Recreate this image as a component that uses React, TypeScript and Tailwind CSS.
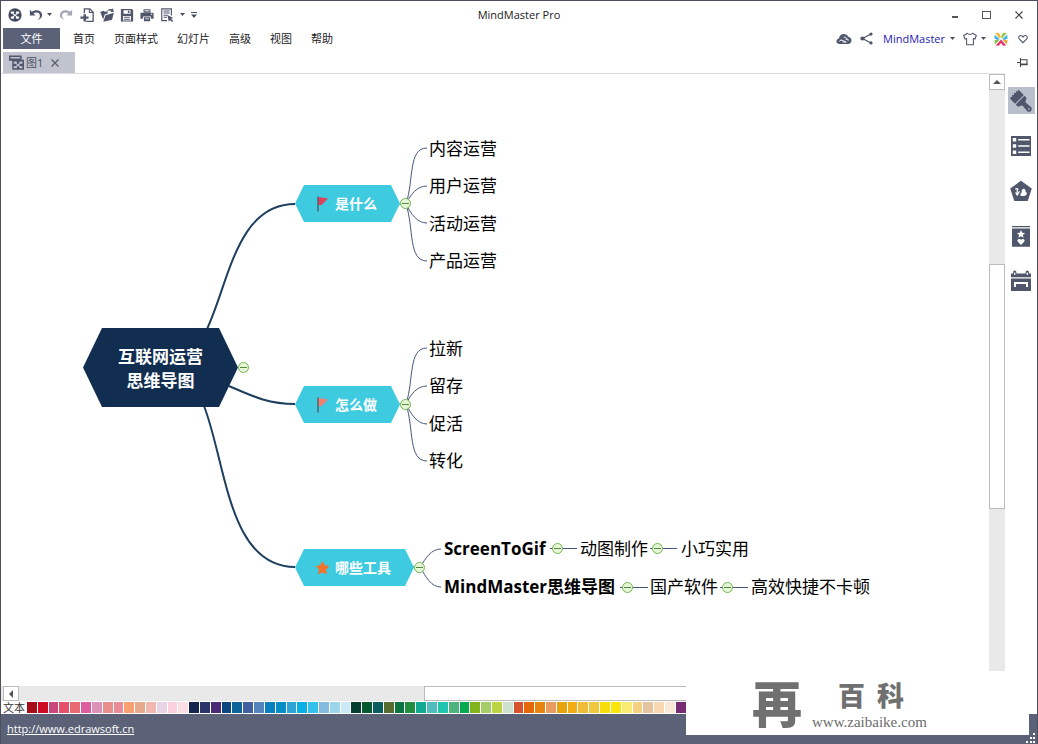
import React from "react";

type P = { className?: string };

function Caret({ className = "" }: P) {
  return (
    <svg viewBox="0 0 5 3" className={`h-[3px] w-[5px] shrink-0 ${className}`} fill="#4a5064">
      <path d="M0 0h5L2.500 3z" />
    </svg>
  );
}

function Icon({ children, className = "size-3.5" }: { children: React.ReactNode; className?: string }) {
  return (
    <svg viewBox="0 0 16 16" className={`shrink-0 ${className}`} fill="#50576d" aria-hidden="true">
      {children}
    </svg>
  );
}

const LogoIcon = () => (
  <Icon>
    <circle cx="8" cy="8" r="7.600" fill="#454b5f" />
    <g fill="#fff">
      <rect x="3.200" y="4" width="3.800" height="2.600" rx=".8" />
      <rect x="9" y="4" width="3.800" height="2.600" rx=".8" />
      <rect x="3.200" y="9.600" width="3.800" height="2.600" rx=".8" />
      <rect x="9" y="9.600" width="3.800" height="2.600" rx=".8" />
      <path d="M5.500 6.500l5 3.600M10.500 6.500l-5 3.600" stroke="#fff" strokeWidth="1.200" />
    </g>
  </Icon>
);

const UndoIcon = () => (
  <Icon>
    <path d="M1 2v6.500h6.500L5.200 6.200C8 4.400 12.600 5 12.400 9c0 2-.9 3.200-2.400 4.600C13.600 12.400 15.300 10 15 7.400 14.600 2.600 8 .9 3.300 4.300z" />
  </Icon>
);

const RedoIcon = () => (
  <Icon>
    <path fill="#a5a8b2" d="M15 2v6.500H8.500l2.300-2.300C8 4.400 3.400 5 3.600 9c0 2 .9 3.200 2.400 4.600C2.400 12.400.7 10 1 7.400 1.400 2.600 8 .9 12.700 4.300z" />
  </Icon>
);

const NewIcon = () => (
  <Icon>
    <path d="M5 6V1h6.200L15 4.800V15.300H7" fill="none" stroke="#50576d" strokeWidth="1.500" />
    <path d="M10.700 1v4.200H15" fill="none" stroke="#50576d" strokeWidth="1.200" />
    <path d="M4 7h2.800v2.800h3v2.600h-3v3H4v-3H.5V9.800H4z" />
  </Icon>
);

const OpenIcon = () => (
  <Icon>
    <path d="M.3 4.500l3.600-1.300 1.700 1.200 2.900-.6.6 2.300-3.800 1.300-1.600 5.800z" />
    <path d="M6.300 8.200L15.800 5.400l-2 8-10 2.300z" />
    <path d="M8 3.400C9.500 1.300 11.500.8 13.500 1.500L14.400.2 16 4.200l-4.200.3.800-1.400C11 2.500 9.600 2.600 8 3.400z" />
  </Icon>
);

const SaveIcon = () => (
  <Icon>
    <path fillRule="evenodd" d="M1 1h12.500L15 2.500V15.500H1zM4 2.500v4h8v-4zM3.500 9v5.200h9V9z" />
    <path d="M9 3h1.800v2.800H9zM4.700 10h6.600v1.100H4.700zM4.700 12.200h6.600v1.100H4.700z" />
  </Icon>
);

const PrintIcon = () => (
  <Icon>
    <path d="M4 1.500h8V5H4zM.5 5.500h15v6.800h-3V9.700h-9v2.600h-3zM4.500 10.700h7v4.300h-7z" />
    <path d="M5.200 2.500h5.600v1.300H5.200zM12.500 6.600h1.500v1.100h-1.500zM5.800 12h4.400v.8H5.800z" fill="#fff" />
  </Icon>
);

const ExportIcon = () => (
  <Icon>
    <path d="M13 8.500V1H2v13.500h6" fill="none" stroke="#50576d" strokeWidth="1.300" />
    <path d="M4 3.400h7M4 5.800h7M4 8.200h5M4 10.600h4" stroke="#50576d" strokeWidth="1.200" />
    <path d="M8.500 8l6.800 3.500-2.600.9 2.300 2.400-1.300 1.200-2.300-2.400-1.400 2z" />
  </Icon>
);

const TabIcon = () => (
  <Icon className="size-[15px]">
    <path fillRule="evenodd" d="M0 .5h13.500V5H16v10.800H3.500V6H0zM1.500 2v1.800h10.300V2z" />
    <g fill="#c1c3cf">
      <rect x="5" y="7" width="3.400" height="2.200" rx=".5" />
      <rect x="11" y="7" width="3.400" height="2.200" rx=".5" />
      <rect x="5" y="12" width="3.400" height="2.200" rx=".5" />
      <rect x="11" y="12" width="3.400" height="2.200" rx=".5" />
    </g>
    <path d="M7.200 8.600l5 4.200M12.200 8.600l-5 4.200" stroke="#c1c3cf" strokeWidth="1.200" />
  </Icon>
);

const CloudIcon = () => (
  <Icon className="size-4">
    <path d="M3.800 13C1.600 13 .3 11.800.4 10.300.5 8.800 1.500 7.700 3 7.400 3.300 4.600 5.400 3 7.800 3c2 0 3.600 1 4.400 2.700 2 .2 3.300 1.700 3.300 3.700 0 2.100-1.500 3.600-3.600 3.600z" />
    <path d="M3.200 10.500c.8-1.700 2.600-1.900 3.800-.8l3.500 1.600M7.600 6.500c1.400-.8 3-.1 3.200 1.400" stroke="#fff" strokeWidth="1" fill="none" />
    <path d="M6.500 11h3.200M9.500 8.300h2.600v1.500" stroke="#fff" strokeWidth=".9" fill="none" />
  </Icon>
);

const ShareIcon = () => (
  <Icon className="size-[13px]">
    <path d="M13.500 2.500L3 8l10.500 5.500" fill="none" stroke="#50576d" strokeWidth="1.500" />
    <circle cx="13.500" cy="2.500" r="2" />
    <circle cx="3" cy="8" r="2.600" />
    <circle cx="13.500" cy="13.500" r="2" />
  </Icon>
);

const ShirtIcon = () => (
  <Icon className="size-3.5">
    <path d="M5 1.500L.8 4l1.400 4 1.900-.6V14.500h7.800V7.400l1.900.6 1.400-4L11 1.500c-1.200 1.700-4.800 1.700-6 0z" fill="none" stroke="#50576d" strokeWidth="1.200" strokeLinejoin="round" />
  </Icon>
);

const PinwheelIcon = () => (
  <Icon className="size-3.5">
    <path d="M1.500 1.200L5.500.8 8 5.800 6.500 7z" fill="#f2b234" />
    <path d="M14.500 1.200L10.500.8 8 5.800 9.500 7z" fill="#8dc63f" />
    <path d="M.8 3.200L6.500 8 4 9 .5 7.500z" fill="#3bb4e0" />
    <path d="M15.200 3.200L9.500 8 12 9l3.500-1.500z" fill="#3bb4e0" />
    <path d="M.5 9.500L4 9l2.500-.3-5.200 5.500z" fill="#7cc242" />
    <path d="M15.500 9.500L12 9l-2.500-.3 5.200 5.500z" fill="#f4a32a" />
    <path d="M2 15.300L8 8.500l6 6.800-3.600.4L8 12.500l-2.400 3.200z" fill="#e6336f" />
  </Icon>
);

const HeartIcon = () => (
  <Icon className="size-2.5">
    <path d="M8 14L2 8C-.5 5 3 .8 6.500 3.200L8 5l1.500-1.800C13 .8 16.500 5 14 8z" fill="none" stroke="#50576d" strokeWidth="1.700" />
  </Icon>
);

const PinIcon = () => (
  <Icon className="size-[11px]">
    <path d="M0 8h5M5 1.500v13M5 4h9.500v7H5" fill="none" stroke="#444" strokeWidth="1.500" />
    <path d="M5 9.500h10.300V12H5z" fill="#444" />
  </Icon>
);

const railIcons = [
  {
    label: "格式",
    art: (
      <g transform="translate(9.500 9.500) rotate(-45)">
        <path d="M-6.200-8.200l1.500-1.300 1.200 1 1.400-1.300 1.400 1.200L.8-9.900l1.400 1.300 1.300-1 1.300 1.200 1.400-.8V-1.600H-6.200z" />
        <path d="M-6.200-.6H6.200V1.800C6.200 3.600 2.200 3.500 2.200 5.200L2.700 12c.3 3.600-5.700 3.600-5.400 0l.5-6.800C-2.200 3.500-6.200 3.600-6.200 1.800z" />
        <circle cx="0" cy="12" r=".9" fill="#b9bfcb" />
      </g>
    ),
  },
  {
    label: "大纲",
    art: (
      <g>
        <path d="M0 0h20v20H0z" />
        <path d="M1.800 2h3.400v3.400H1.800zM1.800 8.300h3.400v3.400H1.800zM1.800 14.600h3.400V18H1.800zM7.200 3h11.300v1.500H7.200zM7.200 9.300h11.300v1.500H7.200zM7.200 15.600h11.300v1.500H7.200z" fill="#fff" />
      </g>
    ),
  },
  {
    label: "图标",
    art: (
      <g>
        <path d="M10-.3L20.800 7.600 16.700 20H3.300L-.8 7.600z" />
        <path d="M9.500 14.700c2.200.5 5.800.5 6.300-1.800.2-1.300-.4-2-1.300-2.500.3-1.500-1.400-3.400-3-2.200-1.300 1-.9 2.100-.5 3-1.200.6-1.900 1.900-1.500 3.500z" fill="#fff" />
        <path d="M4.300 8.200c1.200-1 2.300-.6 3 .4M6.200 8.500v5.600M4.600 11.500l1.600 2.600 2.300-3.800" stroke="#fff" strokeWidth="1.200" fill="none" />
      </g>
    ),
  },
  {
    label: "剪贴画",
    art: (
      <g>
        <path d="M1 0h18v1.200H1zM1 2.600h18V20.800H1z" />
        <path d="M10 4l1.200 2.700 2.900.3-2.200 1.900.7 2.800L10 10.200l-2.600 1.500.7-2.800L5.900 7l2.900-.3zM10 19l-3.200-3.300c-1.500-2 1.500-3.900 3.200-1.900 1.700-2 4.700-.1 3.200 1.900z" fill="#fff" />
      </g>
    ),
  },
  {
    label: "任务",
    art: (
      <g>
        <path d="M0 2.500h2V1.200a1.700 1.700 0 0 1 3.400 0V2.500h9.200V1.200a1.700 1.700 0 0 1 3.400 0V2.500h2v3.700H0zM0 7.500h20V20H0z" />
        <path d="M3.100 1.500h1.200v2.400H3.100zM15.700 1.500h1.200v2.400h-1.200zM3 11h14v5H3z" fill="#fff" />
        <path d="M5 13h10v3H5z" />
      </g>
    ),
  },
];

const menus = ["首页", "页面样式", "幻灯片", "高级", "视图", "帮助"];

const swatches = [
  "bg-[#a80c18]", "bg-[#cc0a24]", "bg-[#c9487a]", "bg-[#e6506a]", "bg-[#e66a70]",
  "bg-[#df5ca0]", "bg-[#dd92b8]", "bg-[#e88c8c]", "bg-[#e88c98]", "bg-[#f9a070]",
  "bg-[#e8a88c]", "bg-[#f2b8b0]", "bg-[#e8d4e4]", "bg-[#f9d0dc]", "bg-[#fbdfe4]",
  "bg-[#14244e]", "bg-[#2a3668]", "bg-[#4a2a74]", "bg-[#0c4680]", "bg-[#0c6498]",
  "bg-[#4060a0]", "bg-[#5484bc]", "bg-[#0a80c0]", "bg-[#0a8cc4]", "bg-[#2ca4d4]",
  "bg-[#06b0e4]", "bg-[#34c0ec]", "bg-[#84bce0]", "bg-[#9cd4ea]", "bg-[#cce8f4]",
  "bg-[#053f30]", "bg-[#065a30]", "bg-[#0a5e60]", "bg-[#566c30]", "bg-[#0a7440]",
  "bg-[#209040]", "bg-[#10a890]", "bg-[#50bcc0]", "bg-[#20c4b0]", "bg-[#4cb47c]",
  "bg-[#06a850]", "bg-[#80b41c]", "bg-[#a4cc68]", "bg-[#bcd444]", "bg-[#cce0cc]",
  "bg-[#d8502c]", "bg-[#e46808]", "bg-[#e8840c]", "bg-[#e89c60]", "bg-[#e8a40c]",
  "bg-[#f4ac14]", "bg-[#f0bc38]", "bg-[#f0c840]", "bg-[#f8dc0c]", "bg-[#fce60a]",
  "bg-[#f8ec70]", "bg-[#f4d080]", "bg-[#e4c4a0]", "bg-[#f8d8b0]", "bg-[#f8e8d8]",
  "bg-[#782c74]",
];

const leaves = [
  { text: "内容运营", at: "left-[428px] top-[63px]" },
  { text: "用户运营", at: "left-[428px] top-[100px]" },
  { text: "活动运营", at: "left-[428px] top-[138px]" },
  { text: "产品运营", at: "left-[428px] top-[175px]" },
  { text: "拉新", at: "left-[428px] top-[263px]" },
  { text: "留存", at: "left-[428px] top-[300px]" },
  { text: "促活", at: "left-[428px] top-[338px]" },
  { text: "转化", at: "left-[428px] top-[375px]" },
  { text: "ScreenToGif", at: "left-[443px] top-[463px]", bold: true },
  { text: "动图制作", at: "left-[579px] top-[463px]" },
  { text: "小巧实用", at: "left-[680px] top-[463px]" },
  { text: "MindMaster思维导图", at: "left-[443px] top-[501px]", bold: true },
  { text: "国产软件", at: "left-[649px] top-[501px]" },
  { text: "高效快捷不卡顿", at: "left-[750px] top-[501px]" },
];

const toggles = [
  "left-[237px] top-[288px]",
  "left-[399px] top-[124px]",
  "left-[399px] top-[325px]",
  "left-[413px] top-[488px]",
  "left-[551px] top-[469px]",
  "left-[651px] top-[469px]",
  "left-[621px] top-[508px]",
  "left-[721px] top-[508px]",
];

const Flag = ({ color }: { color: string }) => (
  <svg viewBox="0 0 13 16" className="h-4 w-[13px] shrink-0">
    <path d="M2 1l10 1.500L5.500 9H2z" fill={color} />
    <path d="M2 .5v15" stroke="#5a5f6e" strokeWidth="1.500" />
  </svg>
);

const Star = () => (
  <svg viewBox="0 0 14 14" className="h-3.5 w-[13px] shrink-0">
    <path d="M7 .6l2 4 4.300.6-3.100 3.200.8 4.600L7 11l-4 2 .8-4.600L.7 5.200 5 4.600z" fill="#f4722a" stroke="#f4722a" strokeWidth="1.200" strokeLinejoin="round" />
  </svg>
);

const topics = [
  { text: "是什么", at: "left-[294px] top-[111px] w-[105px] [clip-path:polygon(9px_0,96px_0,100%_50%,96px_100%,9px_100%,0_50%)]", icon: <Flag color="#e0405c" /> },
  { text: "怎么做", at: "left-[294px] top-[312px] w-[105px] [clip-path:polygon(9px_0,96px_0,100%_50%,96px_100%,9px_100%,0_50%)]", icon: <Flag color="#f08070" /> },
  { text: "哪些工具", at: "left-[294px] top-[475px] w-[119px] [clip-path:polygon(9px_0,110px_0,100%_50%,110px_100%,9px_100%,0_50%)]", icon: <Star /> },
];

function Connectors() {
  return (
    <svg className="absolute inset-0 h-full w-full" fill="none">
      <g transform="translate(-1 -74)">
        <g stroke="#1e3f5e" strokeWidth="2">
          <path d="M207 329C229 282 237 204 295 204" />
          <path d="M229 386C252 396 268 404 295 404" />
          <path d="M204 406C226 462 228 567 295 567" />
        </g>
        <g stroke="#44567c">
          <path d="M399 204H406C414 180 408 148 427 148M406 204C411 194 417 186 427 186M406 204C411 214 417 223 427 223M406 204C414 228 408 261 427 261" />
          <path d="M399 404H406C414 380 408 348 427 348M406 404C411 394 417 386 427 386M406 404C411 414 417 424 427 424M406 404C414 428 408 461 427 461" />
          <path d="M413 567H420C426 558 431 549 441 549M420 567C426 577 431 587 441 587" />
          <path d="M550 548.500H577M650 548.500H677M620 587.500H648M720 587.500H748" />
        </g>
      </g>
    </svg>
  );
}

export default function App() {
  return (
    <div className="relative flex min-h-screen flex-col border-x border-t border-[#4d4f5c] bg-white font-['Open_Sans','Noto_Sans_CJK_SC',sans-serif] text-[11px] text-[#222]">
      <header>
        <div className="grid h-[27px] grid-cols-[1fr_auto_1fr] items-center">
          <div className="flex items-center gap-[7px] pl-[7px]">
            <LogoIcon />
            <span className="flex items-center gap-1">
              <button aria-label="撤销"><UndoIcon /></button>
              <Caret />
            </span>
            <button aria-label="恢复"><RedoIcon /></button>
            <span className="flex items-center gap-[6px]">
              <button aria-label="新建"><NewIcon /></button>
              <button aria-label="打开"><OpenIcon /></button>
              <button aria-label="保存"><SaveIcon /></button>
              <button aria-label="打印"><PrintIcon /></button>
              <button aria-label="导出"><ExportIcon /></button>
              <Caret />
              <button aria-label="自定义工具栏">
                <svg viewBox="0 0 6 6" className="h-1.5 w-1.5" fill="#4a5064">
                  <path d="M0 0h6v1H0zM0 2.500h6L3 6z" />
                </svg>
              </button>
            </span>
          </div>
          <h1 className="pt-[2px] text-[11px]">MindMaster Pro</h1>
          <div className="flex items-center justify-end gap-6 pr-[14px]">
            <button aria-label="最小化" className="flex h-3 w-[6px] items-center"><span className="mt-1 h-[2px] w-full bg-[#555]" /></button>
            <button aria-label="最大化" className="h-2 w-[9px] border border-[#555]" />
            <button aria-label="关闭">
              <svg viewBox="0 0 8 8" className="size-2" stroke="#444" strokeWidth="1.200"><path d="M.5.5l7 7M7.500.5l-7 7" /></svg>
            </button>
          </div>
        </div>
        <div className="flex h-[21px] items-stretch">
          <button className="ml-[2px] w-[57px] bg-[#5b6278] pt-[2px] text-white">文件</button>
          <nav className="ml-[13px] flex gap-[19px] pt-[2px]">
            {menus.map((m) => (
              <button key={m}>{m}</button>
            ))}
          </nav>
          <div className="ml-auto flex items-center gap-2 pr-[9px]">
            <button aria-label="云"><CloudIcon /></button>
            <button aria-label="分享"><ShareIcon /></button>
            <button className="ml-[2px] flex items-center gap-[5px] text-[#1c1cb4]">
              <span className="pt-[2px]">MindMaster</span> <Caret />
            </button>
            <button aria-label="主题" className="flex items-center gap-1"><ShirtIcon /><Caret /></button>
            <button aria-label="应用"><PinwheelIcon /></button>
            <button aria-label="收藏" className="pl-[2px]"><HeartIcon /></button>
          </div>
        </div>
        <div className="mt-[3px] flex h-[21px] items-center justify-between">
          <div className="ml-[2px] flex h-full w-[72px] items-center gap-[2px] bg-[#c1c3cf] pl-1.5 text-[#4a5064]">
            <TabIcon />
            <span className="pt-[2px]">图1</span>
            <button aria-label="关闭标签" className="ml-1.5">
              <svg viewBox="0 0 8 8" className="size-2" stroke="#50576d" strokeWidth="1.100"><path d="M.5.5l7 7M7.500.5l-7 7" /></svg>
            </button>
          </div>
          <button aria-label="固定" className="mr-[9px]"><PinIcon /></button>
        </div>
      </header>

      <div className="flex flex-1">
        <div className="flex flex-1 flex-col">
          <div className="flex flex-1">
            <main className="relative min-h-[540px] flex-1 overflow-hidden border-t border-[#dcdce0]">
              <Connectors />
              <div className="absolute left-[82px] top-[254px] flex h-[79px] w-[155px] items-center justify-center bg-[#112d50] pt-[2px] text-center text-[17px] leading-6 font-bold text-white [clip-path:polygon(19px_0,136px_0,100%_50%,136px_100%,19px_100%,0_50%)]">
                互联网运营
                <br />
                思维导图
              </div>
              {topics.map((t) => (
                <div key={t.text} className={`absolute flex h-[37px] items-center gap-1.5 bg-[#3fcbdf] pl-[21px] text-[14px] leading-5 font-bold whitespace-nowrap text-white ${t.at}`}>
                  {t.icon}
                  {t.text}
                </div>
              ))}
              {leaves.map((l) => (
                <div key={l.text} className={`absolute text-[17px] leading-6 whitespace-nowrap text-black ${l.bold ? "font-bold" : ""} ${l.at}`}>
                  {l.text}
                </div>
              ))}
              {toggles.map((at) => (
                <button key={at} aria-label="折叠" className={`absolute flex size-[11px] items-center justify-center rounded-full border border-[#72b84e] bg-[#e6f6d6] ${at}`}>
                  <span className="h-px w-[7px] bg-[#4f8a3c]" />
                </button>
              ))}
            </main>
            <div className="flex w-4 flex-col bg-[#e9e9e9]">
              <button aria-label="向上滚动" className="mt-px flex h-4 items-center justify-center border border-[#bbb] bg-white">
                <svg viewBox="0 0 8 4" className="h-1 w-2" fill="#555"><path d="M4 0l4 4H0z" /></svg>
              </button>
              <div className="mt-[174px] h-[245px] border border-[#bbb] bg-white" />
            </div>
          </div>
          <div className="flex h-[15px] bg-[#e9e9e9]">
            <button aria-label="向左滚动" className="ml-[2px] flex w-4 items-center justify-center border border-[#bbb] bg-white">
              <svg viewBox="0 0 4 8" className="h-2 w-1" fill="#555"><path d="M0 4l4-4v8z" /></svg>
            </button>
            <div className="ml-[405px] flex-1 border border-[#bbb] bg-white" />
          </div>
        </div>
        <aside className="flex w-8 flex-col items-center gap-[18px] pt-3.5">
          {railIcons.map((r, i) => (
            <button key={r.label} aria-label={r.label} className={`flex size-[27px] items-center justify-center ${i === 0 ? "bg-[#b9bfcb]" : ""}`}>
              <svg viewBox="0 0 20 20" className="size-5 overflow-visible" fill="#50576d">{r.art}</svg>
            </button>
          ))}
        </aside>
      </div>

      <div className="flex h-[13px] items-center pl-[2px]">
        <span className="w-6 leading-[13px] text-[#333]">文本</span>
        <div className="flex h-[11px] w-[659px] gap-px">
          {swatches.map((c) => (
            <button key={c} aria-label="颜色" className={`flex-1 ${c}`} />
          ))}
        </div>
      </div>
      <footer className="flex h-[30px] items-center justify-between bg-[#5b6278] pl-1.5">
        <a href="http://www.edrawsoft.cn" className="text-[11px] text-white underline">http://www.edrawsoft.cn</a>
        <svg viewBox="0 0 12 12" className="size-3 self-end" fill="#fff">
          <path d="M8 1h2v2H8zM5 5h2v2H5zM8 5h2v2H8zM1 9h2v2H1zM5 9h2v2H5zM8 9h2v2H8z" />
        </svg>
      </footer>

      <div className="absolute right-2 bottom-[9px] flex h-16 w-[343px] items-center bg-white pl-[66px] font-['Noto_Sans_CJK_SC',sans-serif] text-[#707070]">
        <span className="pb-1 text-[50px] leading-[60px] font-black">再</span>
        <div className="ml-2.5 flex flex-col pt-1">
          <span className="flex gap-3 pl-[26px] text-[27px] leading-8 font-black">
            <span>百</span>
            <span>科</span>
          </span>
          <span className="pt-px font-['Liberation_Serif',serif] text-[15px] leading-5 text-[#6c6c6c]">www.zaibaike.com</span>
        </div>
      </div>
    </div>
  );
}
